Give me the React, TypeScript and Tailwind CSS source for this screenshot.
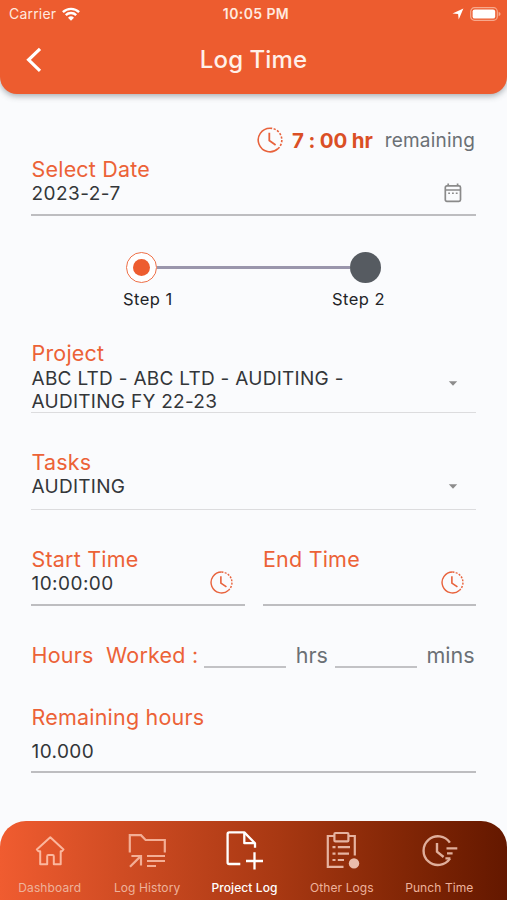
import React from 'react';

interface FieldProps {
  label: string;
  value?: string;
  icon?: React.ReactNode;
}

const ClockIcon: React.FC<{ className?: string }> = ({ className }) => (
  <svg viewBox="0 0 26 26" fill="none" stroke="#e8623c" strokeWidth="1.6" className={className}>
    <path d="M13 1.2A11.8 11.8 0 1 0 21 21.7" />
    <path d="M13 1.2A11.8 11.8 0 0 1 21 21.7" strokeDasharray="2.2 1.5" />
    <path d="M12.3 5.8V13.6L18.6 18" strokeWidth="1.8" />
  </svg>
);

const CalendarIcon = () => (
  <svg viewBox="0 0 18 20" className="w-[18px] h-5" fill="none" stroke="#8a8a8a" strokeWidth="1.7">
    <rect x="1.3" y="2.8" width="15.2" height="15.6" rx="1.6" />
    <path d="M1.3 7H16.5" strokeWidth="1.5" />
    <path d="M4.2 0.5V3M13.6 0.5V3" />
    <path d="M4.2 10.2H6M8 10.2H9.8M11.8 10.2H13.6" strokeWidth="1.5" />
  </svg>
);

const Caret = () => (
  <svg viewBox="0 0 10 5" className="w-[10px] h-[5px]">
    <path d="M0.8 0.3H9.2L5 4.7Z" fill="#8c8c8c" />
  </svg>
);

const Label: React.FC<{ children: React.ReactNode }> = ({ children }) => (
  <div className="pl-[0.5px] text-[21.5px] leading-6 tracking-[0.2px] text-[#ec6237] whitespace-pre">{children}</div>
);

const Field: React.FC<FieldProps> = ({ label, value, icon }) => (
  <div className="relative h-[59px] border-b-2 border-[#bdbdc0]">
    <Label>{label}</Label>
    <div className="pt-px pl-[0.5px] text-[19px] leading-6 tracking-[0.45px] text-[#333639]">{value}</div>
    <div className="absolute right-3 top-6">{icon}</div>
  </div>
);

const navItems = [
  {
    label: 'Dashboard',
    icon: (
      <svg viewBox="0 0 40 40" className="w-10 h-10" fill="none" stroke="#fbb79e" strokeWidth="2" strokeLinejoin="round">
        <path d="M20.3 7.2L33.5 19.4L32 21.2H30.7V34.2H23.8V26.2Q23.8 25 22.6 25H18.4Q17.2 25 17.2 26.2V34.2H10.2V21.2H8.3L6.8 19.4Z" />
      </svg>
    ),
  },
  {
    label: 'Log History',
    icon: (
      <svg viewBox="0 0 40 40" className="w-10 h-10" fill="none" stroke="#f3ae95" strokeWidth="2.2">
        <path d="M2.8 22.5V5.2H14L18.6 10H37.8V22.5" />
        <path d="M3 36.8L13.2 26.6M4.4 26H14V35.6" />
        <path d="M20 26H38M20 31H38M20 36H29" />
      </svg>
    ),
  },
  {
    label: 'Project Log',
    active: true,
    icon: (
      <svg viewBox="0 0 40 40" className="w-10 h-10" fill="none" stroke="#fff" strokeWidth="2.3" strokeLinejoin="round">
        <path d="M16.3 34H5.2Q3.6 34 3.6 32.4V4Q3.6 2.4 5.2 2.4H20.3L31 13.2V17.8" />
        <path d="M20.3 2.4V13.2H31" />
        <path d="M30.5 22.2V39.6M22 31H39" />
      </svg>
    ),
  },
  {
    label: 'Other Logs',
    icon: (
      <svg viewBox="0 0 40 40" className="w-10 h-10" fill="none" stroke="#e6b3a0" strokeWidth="2.2">
        <path d="M12 6H5.8V36.8H21.5M26.5 6H32.8V25.5" />
        <rect x="12.4" y="3" width="14" height="8.4" rx="1" />
        <path d="M10.5 17.2H13.5M15.8 17.2H28M10.5 23.6H13.5M15.8 23.6H27M10.5 30H13.5M15.8 30H22" />
        <circle cx="32" cy="33.4" r="5.2" fill="#e9bcab" stroke="none" />
      </svg>
    ),
  },
  {
    label: 'Punch Time',
    icon: (
      <svg viewBox="0 0 40 40" className="w-10 h-10" fill="none" stroke="#dfae9b" strokeWidth="2.4">
        <path d="M30.9 12.6A14.4 14.4 0 1 0 30.9 28.7" />
        <path d="M18 13V21.6L24.6 27" />
        <path d="M27.5 18.4H38.3M28 23.4H33.6M26.4 28.4H31.4" strokeWidth="2.1" />
      </svg>
    ),
  },
];

const StatusBar = () => (
  <div className="h-[27px] flex items-center text-[14px] text-[#ffe9df]">
    <div className="flex-1 flex items-center gap-[6px] pl-[9px]">
      <span className="tracking-[0.2px]">Carrier</span>
      <svg viewBox="0 0 18 14" className="w-[18px] h-[14px]" fill="none" stroke="#fff" strokeWidth="2.4">
        <path d="M0.9 5.2A11.6 11.6 0 0 1 17.1 5.2" />
        <path d="M3.8 8.2A7.4 7.4 0 0 1 14.2 8.2" />
        <path d="M9 13.8L6 10.7A4.3 4.3 0 0 1 12 10.7Z" fill="#fff" stroke="none" />
      </svg>
    </div>
    <span className="pr-[2px] font-semibold tracking-[0.4px] -mr-1">10:05 PM</span>
    <div className="flex-1 flex items-center justify-end gap-[6px] pr-[6px]">
      <svg viewBox="0 0 12 12" className="w-3 h-3" fill="#fff">
        <path d="M11.4 0.5L6.7 11.4L6.1 6L0.5 5.4Z" />
      </svg>
      <svg viewBox="0 0 31 14" className="w-[31px] h-[14px]">
        <rect x="0.7" y="0.7" width="26.6" height="12.6" rx="3.8" fill="none" stroke="#f7a98d" strokeWidth="1.2" />
        <rect x="2.6" y="2.4" width="22.6" height="9.2" rx="2.2" fill="#fff" />
        <path d="M28.6 4.7Q30.6 5.4 30.6 7Q30.6 8.6 28.6 9.3Z" fill="#f7a98d" />
      </svg>
    </div>
  </div>
);

const App: React.FC = () => {
  return (
    <div className="w-[507px] h-[900px] flex flex-col bg-[#fafbfd] overflow-hidden font-['Inter',sans-serif]">
      <header className="h-[94px] shrink-0 bg-[#ed5c2f] rounded-b-[17px] shadow-[0_2px_6px_rgba(60,70,80,0.45)]">
        <StatusBar />
        <div className="h-[65px] grid grid-cols-[1fr_auto_1fr] items-center">
          <svg viewBox="0 0 16 26" className="w-4 h-[26px] ml-[26px]" fill="none" stroke="#fff" strokeWidth="3.2">
            <path d="M14 1.8L2.6 12.8L14 23.8" />
          </svg>
          <h1 className="pt-px text-[24px] font-medium tracking-[0.1px] text-[#fff0e9]">Log Time</h1>
        </div>
      </header>

      <main className="flex-1 px-[31px]">
        {/* Remaining time */}
        <div className="h-[63px] pt-[33px] pr-px flex items-start justify-end">
          <ClockIcon className="w-[26px] h-[26px] mr-[9px]" />
          <span className="pt-px text-[20.5px] leading-[26px] font-bold tracking-[-0.15px] text-[#da4f25] mr-3">7 : 00 hr</span>
          <span className="pt-px text-[19px] leading-[26px] tracking-[0.2px] text-[#6b7075]">remaining</span>
        </div>

        <Field label="Select Date" value="2023-2-7" icon={<div className="pt-0.5 pr-[2px]"><CalendarIcon /></div>} />

        {/* Steps */}
        <div className="mt-9 px-[95px] flex items-center">
          <div className="size-[31px] rounded-full border-[1.5px] border-[#ee7048] bg-white flex items-center justify-center">
            <div className="size-[17px] rounded-full bg-[#ed5c2f]" />
          </div>
          <div className="flex-1 h-[2.5px] bg-[#9a96ac]" />
          <div className="size-[31px] rounded-full bg-[#565b61]" />
        </div>
        <div className="mt-1 pl-[92px] pr-[91px] flex justify-between text-[16.5px] leading-6 tracking-[0.45px] text-[#222427]">
          <span>Step 1</span>
          <span>Step 2</span>
        </div>

        <div className="mt-[30px] h-[72px] border-b border-[#dcdcde] relative">
          <Label>Project</Label>
          <div className="mt-0.5 pl-[0.5px] w-[350px] text-[19px] leading-[23px] tracking-[0.28px] text-[#333639]">
            ABC LTD - ABC LTD - AUDITING - AUDITING FY 22-23
          </div>
          <div className="absolute right-[18px] top-10"><Caret /></div>
        </div>

        <div className="mt-[37px] h-[60px] border-b border-[#dcdcde] relative">
          <Label>Tasks</Label>
          <div className="pt-px pl-[0.5px] text-[19px] leading-6 tracking-[0.28px] text-[#333639]">AUDITING</div>
          <div className="absolute right-[18px] top-[34px]"><Caret /></div>
        </div>

        <div className="mt-[37px] grid grid-cols-2 gap-[18px]">
          <Field label="Start Time" value="10:00:00" icon={<ClockIcon className="size-[23px]" />} />
          <Field label="End Time" icon={<ClockIcon className="size-[23px]" />} />
        </div>

        <div className="mt-[37px] flex h-[25px] items-start">
          <Label>{'Hours  Worked :'}</Label>
          <div className="ml-[6px] w-[82px] h-[25px] border-b-2 border-[#c2c2c5]" />
          <span className="ml-[9.5px] text-[21.5px] leading-6 text-[#6b7075]">hrs</span>
          <div className="ml-[7px] w-[82px] h-[25px] border-b-2 border-[#c2c2c5]" />
          <span className="ml-auto pr-[1.5px] text-[21.5px] leading-6 text-[#6b7075]">mins</span>
        </div>

        <div className="mt-[37px] h-[68px] border-b-2 border-[#bdbdc0]">
          <Label>Remaining hours</Label>
          <div className="mt-[11px] pl-[0.5px] text-[19px] leading-6 tracking-[0.4px] text-[#333639]">10.000</div>
        </div>
      </main>

      <nav className="h-[79px] shrink-0 pl-px pr-[19px] grid grid-cols-5 rounded-t-[26px] bg-linear-to-r from-[#f05c30] via-[#a83812] via-55% to-[#641800]">
        {navItems.map(item => (
          <div key={item.label} className="flex flex-col items-center pt-[9px]">
            {item.icon}
            <span
              className={`mt-[10px] text-[12px] leading-4 tracking-[0.1px] whitespace-nowrap ${
                item.active ? 'font-medium text-white' : 'text-[#eeb29b]'
              }`}
            >
              {item.label}
            </span>
          </div>
        ))}
      </nav>
    </div>
  );
};

export default App;
